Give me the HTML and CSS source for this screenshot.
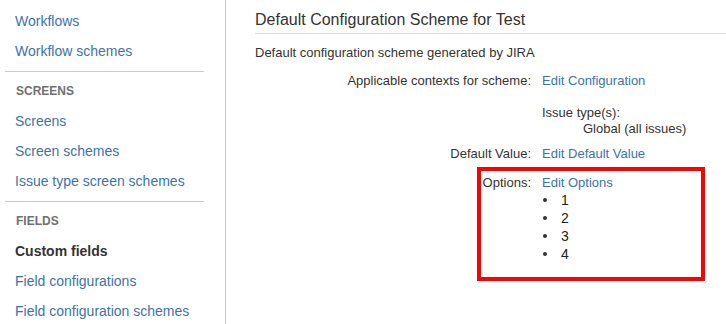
FILE: index.html
```html
<!DOCTYPE html>
<html>
<head>
<meta charset="utf-8">
<link rel="stylesheet" href="styles.css">
</head>
<body>
<div class="page">
  <nav class="sidebar">
    <a class="nav-item" href="#">Workflows</a>
    <a class="nav-item" href="#">Workflow schemes</a>
    <div class="sep"></div>
    <div class="nav-head">SCREENS</div>
    <a class="nav-item" href="#">Screens</a>
    <a class="nav-item" href="#">Screen schemes</a>
    <a class="nav-item" href="#">Issue type screen schemes</a>
    <div class="sep"></div>
    <div class="nav-head">FIELDS</div>
    <span class="nav-item active">Custom fields</span>
    <a class="nav-item" href="#">Field configurations</a>
    <a class="nav-item" href="#">Field configuration schemes</a>
  </nav>
  <main class="content">
    <h2 class="title">Default Configuration Scheme for Test</h2>
    <p class="desc">Default configuration scheme generated by JIRA</p>
    <div class="row row-contexts">
      <div class="label">Applicable contexts for scheme:</div>
      <div class="value"><a href="#">Edit Configuration</a></div>
    </div>
    <div class="row row-issues">
      <div class="label"></div>
      <div class="value">
        <div>Issue type(s):</div>
        <div class="indent">Global (all issues)</div>
      </div>
    </div>
    <div class="row row-default">
      <div class="label">Default Value:</div>
      <div class="value"><a href="#">Edit Default Value</a></div>
    </div>
    <div class="row row-options">
      <div class="label">Options:</div>
      <div class="value">
        <a href="#">Edit Options</a>
        <ul class="opts">
          <li>1</li>
          <li>2</li>
          <li>3</li>
          <li>4</li>
        </ul>
      </div>
    </div>
  </main>
</div>
<div class="highlight"></div>
</body>
</html>
```

FILE: styles.css
```css
html, body {
  margin: 0;
  padding: 0;
  background: #fff;
}
body {
  font-family: "Liberation Sans", Arial, sans-serif;
  font-size: 14px;
  color: #333;
  width: 726px;
  height: 324px;
  overflow: hidden;
  position: relative;
}
a {
  color: #3b73af;
  text-decoration: none;
}
.page {
  display: flex;
  height: 324px;
}
.sidebar {
  flex: none;
  border-right: 1px solid #ccc;
  padding-top: 6px;
  box-sizing: border-box;
  width: 226px;
  display: flex;
  flex-direction: column;
}
.nav-item {
  display: block;
  height: 30px;
  line-height: 30px;
  padding-left: 15px;
  color: #3b73af;
  white-space: nowrap;
}
.nav-item.active {
  color: #333;
  font-weight: bold;
}
.nav-head {
  height: 30px;
  line-height: 31px;
  padding-left: 16px;
  font-size: 12px;
  font-weight: bold;
  color: #707070;
}
.sep {
  margin: 5px 21px 4px 5px;
  border-top: 1px solid #ccc;
}
.content {
  flex: 1;
  padding-left: 29px;
  padding-top: 10px;
  font-size: 13px;
}
.title {
  margin: 0;
  font-size: 16px;
  font-weight: normal;
  line-height: 20px;
  padding-bottom: 3px;
  border-bottom: 1px solid #ddd;
  color: #333;
}
.desc {
  margin: 9px 0 0;
  line-height: 20px;
}
.row {
  display: grid;
  grid-template-columns: 276px 1fr;
  column-gap: 11px;
  line-height: 20px;
}
.label {
  text-align: right;
}
.row-contexts {
  margin-top: 8px;
}
.row-issues {
  margin-top: 14px;
  line-height: 16px;
}
.indent {
  padding-left: 41px;
}
.row-default {
  margin-top: 7px;
}
.row-options {
  margin-top: 10px;
  line-height: 18px;
}
.opts {
  list-style: none;
  margin: -1px 0 0;
  padding: 0;
}
.opts li {
  display: flex;
  align-items: center;
  height: 18px;
  line-height: 18px;
  font-size: 14px;
  color: #222;
}
.opts li::before {
  content: "";
  width: 4px;
  height: 4px;
  border-radius: 50%;
  background: #333;
  margin-left: 1px;
  margin-right: 14px;
}
.highlight {
  position: absolute;
  left: 477px;
  top: 167px;
  width: 228px;
  height: 114px;
  box-sizing: border-box;
  border: 4px solid #f00;
}
```
